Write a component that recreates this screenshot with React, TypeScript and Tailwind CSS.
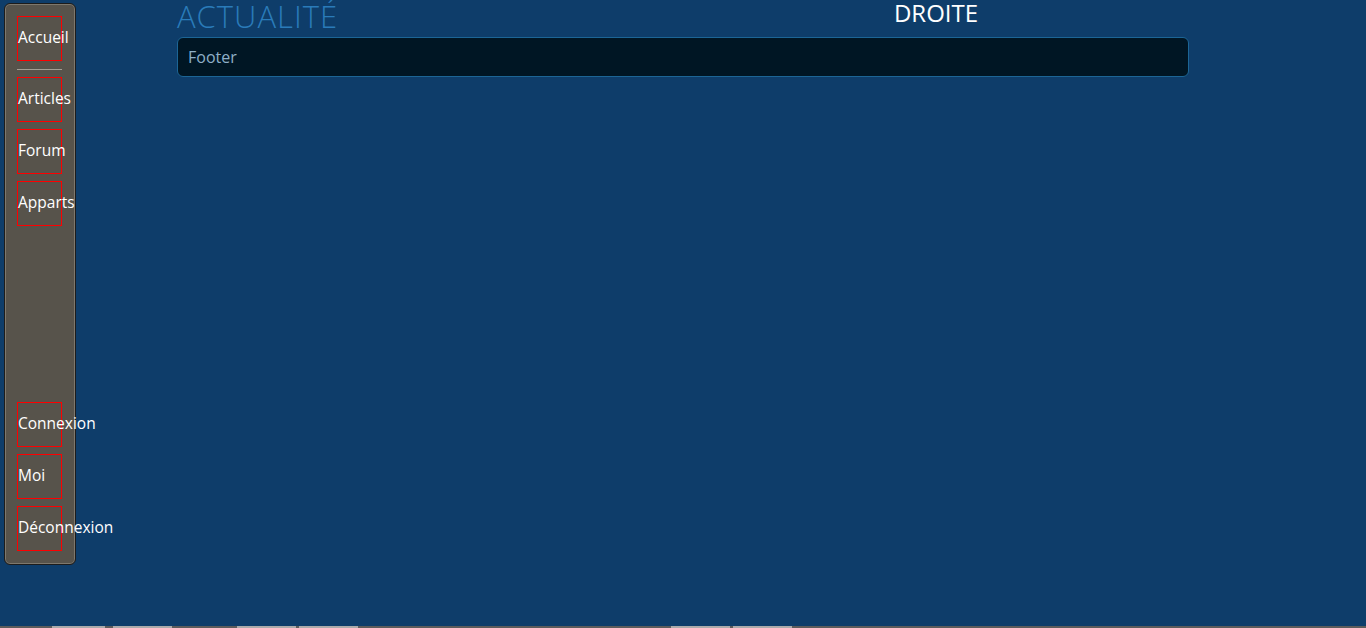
import React from "react";

const font = { fontFamily: '"Open Sans", "DejaVu Sans", sans-serif' };

const NavBox: React.FC<{ label: string }> = ({ label }) => (
  <a className="flex items-center h-[45px] w-[45px] border border-[#ff0000] text-[15.5px] text-white whitespace-nowrap cursor-pointer">
    <span className="mb-[2px]">{label}</span>
  </a>
);

const tabs = [
  [52, 53],
  [113, 59],
  [237, 59],
  [299, 59],
  [671, 59],
  [733, 59],
];

export default function App() {
  return (
    <div className="h-[628px] w-full flex flex-col bg-[#0e3d6a] overflow-hidden" style={font}>
      <div className="flex-1 flex items-start">
        {/* menu gauche */}
        <nav className="ml-[4px] mt-[3px] w-[72px] h-[562px] rounded-[6px] border border-[#1c1c1c] bg-[#57534b] shadow-[inset_0_0_0_1px_#7e786d] flex flex-col justify-between pt-[12px] pb-[13px] pl-[12px]">
          <div className="flex flex-col">
            <NavBox label="Accueil" />
            <div className="mt-[8px] mb-[7px] h-px w-[45px] bg-[#a49e94]" />
            <div className="flex flex-col gap-[7px]">
              <NavBox label="Articles" />
              <NavBox label="Forum" />
              <NavBox label="Apparts" />
            </div>
          </div>
          <div className="flex flex-col gap-[7px]">
            <NavBox label="Connexion" />
            <NavBox label="Moi" />
            <NavBox label="Déconnexion" />
          </div>
        </nav>

        {/* contenu */}
        <main className="ml-[101px] w-[1012px] flex flex-col">
          <div className="grid grid-cols-2 items-start">
            <h1 className="text-[31px] leading-[32px] tracking-[1px] font-light text-[#2a7bb9]">ACTUALITÉ</h1>
            <h2 className="text-[24px] leading-[26px] text-white text-center">DROITE</h2>
          </div>
          <footer className="mt-[5px] h-[40px] rounded-[6px] border border-[#1c6595] bg-[#001624] flex items-center px-[10px] text-[16px] text-[#8fb0c8]">
            Footer
          </footer>
        </main>
      </div>

      {/* barre du bas */}
      <div className="relative h-[2px] bg-[#5c5c5c]">
        {tabs.map(([x, w]) => (
          <span key={x} className="absolute top-0 h-[2px] bg-[#ababab]" style={{ left: x, width: w }} />
        ))}
      </div>
    </div>
  );
}
